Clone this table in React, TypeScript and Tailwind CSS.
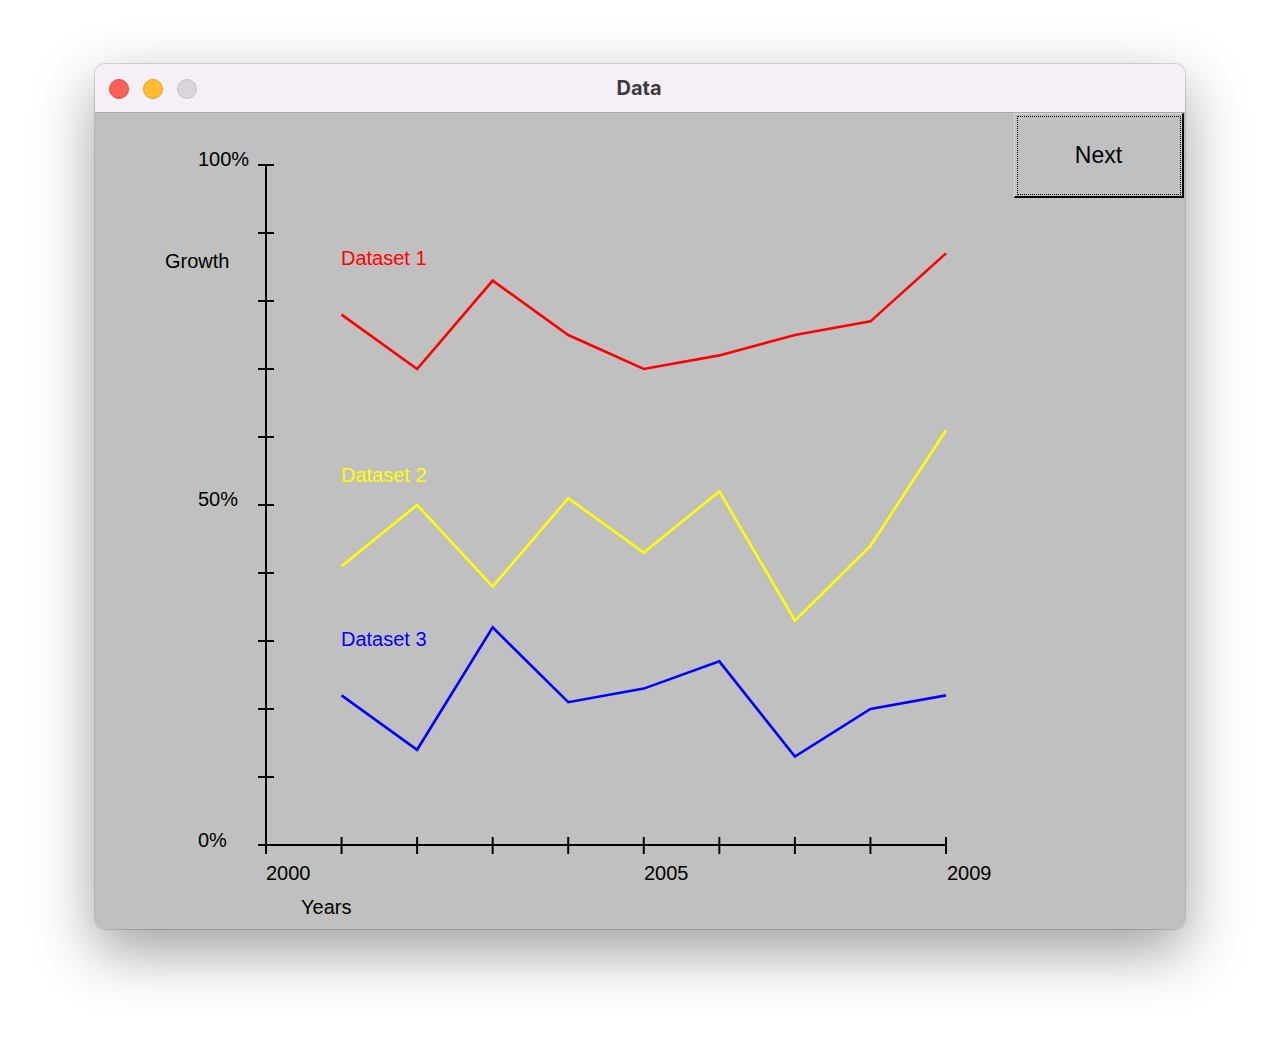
import React from 'react';

type Series = {
  label: string;
  color: string;
  labelY: number;
  values: number[];
};

// chart geometry (px inside the content area)
const AXIS_X = 171;
const AXIS_TOP = 52;
const AXIS_BOTTOM = 732;
const X_END = 851;
const STEP_X = (X_END - AXIS_X) / 9;
const UNIT_Y = (AXIS_BOTTOM - AXIS_TOP) / 100;

const series: Series[] = [
  { label: 'Dataset 1', color: '#ff0000', labelY: 152, values: [78, 70, 83, 75, 70, 72, 75, 77, 87] },
  { label: 'Dataset 2', color: '#ffff00', labelY: 369, values: [41, 50, 38, 51, 43, 52, 33, 44, 61] },
  { label: 'Dataset 3', color: '#0000ff', labelY: 533, values: [22, 14, 32, 21, 23, 27, 13, 20, 22] },
];

function toPoints(values: number[]) {
  return values
    .map((v, i) => `${AXIS_X + STEP_X * (i + 1)},${AXIS_BOTTOM - v * UNIT_Y}`)
    .join(' ');
}

function Chart() {
  const font = { fontFamily: '"Liberation Sans", Arial, sans-serif', fontSize: 20 };
  return (
    <svg width={919} height={816} className="block shrink-0">
      <g style={font} fill="#000">
        <text x={103} y={53}>100%</text>
        <text x={103} y={393}>50%</text>
        <text x={103} y={734}>0%</text>
        <text x={70} y={155}>Growth</text>
        <text x={171} y={767}>2000</text>
        <text x={549} y={767}>2005</text>
        <text x={852} y={767}>2009</text>
        <text x={206} y={801}>Years</text>
      </g>

      {/* axes */}
      <line x1={AXIS_X} y1={AXIS_TOP} x2={AXIS_X} y2={AXIS_BOTTOM + 9} stroke="#000" strokeWidth={2} />
      <line x1={163} y1={AXIS_BOTTOM} x2={X_END} y2={AXIS_BOTTOM} stroke="#000" strokeWidth={2} />
      {Array.from({ length: 10 }).map((_, i) => (
        <line
          key={`y${i}`}
          x1={163}
          x2={179}
          y1={AXIS_TOP + i * 68}
          y2={AXIS_TOP + i * 68}
          stroke="#000"
          strokeWidth={2}
        />
      ))}
      {Array.from({ length: 9 }).map((_, i) => (
        <line
          key={`x${i}`}
          x1={AXIS_X + STEP_X * (i + 1)}
          x2={AXIS_X + STEP_X * (i + 1)}
          y1={AXIS_BOTTOM - 8}
          y2={AXIS_BOTTOM + 9}
          stroke="#000"
          strokeWidth={2}
        />
      ))}

      {series.map((s) => (
        <g key={s.label}>
          <text x={246} y={s.labelY} fill={s.color} style={font}>
            {s.label}
          </text>
          <polyline points={toPoints(s.values)} fill="none" stroke={s.color} strokeWidth={2.6} />
        </g>
      ))}
    </svg>
  );
}

export default function App() {
  return (
    <div className="w-[1280px] h-[1055px] bg-white pt-[64px] pl-[95px]">
      <div className="w-[1090px] h-[865px] rounded-[10px] overflow-hidden shadow-[0_0_0_1px_rgba(0,0,0,0.14),0_22px_60px_rgba(0,0,0,0.38)] flex flex-col">
        {/* title bar */}
        <div className="h-[49px] shrink-0 bg-[#f5f0f7] border-b border-[#a8a6aa] flex items-center px-[14px] pt-[1px]">
          <div className="flex gap-[14px]">
            <span className="w-[20px] h-[20px] rounded-full bg-[#fe5f57] border border-[#e14942]" />
            <span className="w-[20px] h-[20px] rounded-full bg-[#febc2e] border border-[#e0a028]" />
            <span className="w-[20px] h-[20px] rounded-full bg-[#d9d5db] border border-[#c4c0c6]" />
          </div>
          <div className="flex-1 text-center pr-[90px] -mt-[1px] text-[20px] font-bold text-[#3d3b3f] font-['Inter',sans-serif]">
            Data
          </div>
        </div>

        {/* content */}
        <div className="flex-1 bg-[#c0c0c0] flex">
          <Chart />
          <button className="w-[170px] h-[85px] bg-[#c0c0c0] border-t border-l border-[#d8d8d8] border-b-2 border-r-2 border-b-black border-r-black outline-1 outline-dotted outline-black -outline-offset-4 text-[23px] text-black font-['Liberation_Sans',Arial,sans-serif]">
            Next
          </button>
        </div>
      </div>
    </div>
  );
}
